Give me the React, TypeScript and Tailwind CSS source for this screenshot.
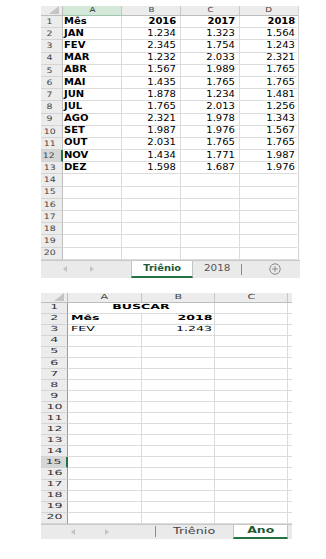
import React from "react";

const months = ["JAN", "FEV", "MAR", "ABR", "MAI", "JUN", "JUL", "AGO", "SET", "OUT", "NOV", "DEZ"];
const y2016 = ["1.234", "2.345", "1.232", "1.567", "1.435", "1.878", "1.765", "2.321", "1.987", "2.031", "1.434", "1.598"];
const y2017 = ["1.323", "1.754", "2.033", "1.989", "1.765", "1.234", "2.013", "1.978", "1.976", "1.765", "1.771", "1.687"];
const y2018 = ["1.564", "1.243", "2.321", "1.765", "1.765", "1.481", "1.256", "1.343", "1.567", "1.765", "1.987", "1.976"];

function Corner() {
  return (
    <svg width="10" height="8" viewBox="0 0 10 8" className="absolute right-[3px] bottom-[1px]">
      <polygon points="0,8 10,8 10,0" fill="#c4c4c4" />
    </svg>
  );
}

function Arrow({ dir }: { dir: "l" | "r" }) {
  return (
    <svg width="4" height="6" viewBox="0 0 4 6">
      {dir === "l" ? <polygon points="4,0 4,6 0,3" fill="#c2c2c2" /> : <polygon points="0,0 0,6 4,3" fill="#c2c2c2" />}
    </svg>
  );
}

function T1({ children, bold, right }: { children: React.ReactNode; bold?: boolean; right?: boolean }) {
  return (
    <span
      className={
        "inline-block text-[8px] leading-none text-black scale-x-[1.25] " +
        (right ? "origin-right " : "origin-left ") +
        (bold ? "font-bold" : "font-normal")
      }
    >
      {children}
    </span>
  );
}

function T2({ children, bold, right, center }: { children: React.ReactNode; bold?: boolean; right?: boolean; center?: boolean }) {
  return (
    <span
      className={
        "inline-block text-[7px] leading-none text-black scale-x-[1.8] " +
        (center ? "origin-center " : right ? "origin-right " : "origin-left ") +
        (bold ? "font-bold" : "font-normal")
      }
    >
      {children}
    </span>
  );
}

function Sheet1() {
  const rows: { a?: string; b?: string; c?: string; d?: string; bold?: boolean }[] = [];
  rows.push({ a: "Mês", b: "2016", c: "2017", d: "2018", bold: true });
  months.forEach((m, i) => rows.push({ a: m, b: y2016[i], c: y2017[i], d: y2018[i] }));
  while (rows.length < 20) rows.push({});

  return (
    <div className="ml-[41px] w-[259px]">
      <div className="w-[258px] border-r border-[#d4d4d4]">
        {/* header */}
        <div className="flex h-[10px]">
          <div className="relative w-[22px] bg-[#ececec] border-r border-b border-[#bdbdbd]">
            <Corner />
          </div>
          <div className="w-[59px] bg-[#d3e8d9] border-r border-[#c6c6c6] border-b border-b-[#9fc7ab] flex items-center justify-center">
            <span className="inline-block text-[7px] leading-none text-[#2b2b2b] scale-x-[1.25]">A</span>
          </div>
          <div className="w-[59px] bg-[#ececec] border-r border-[#c6c6c6] border-b border-b-[#bdbdbd] flex items-center justify-center">
            <span className="inline-block text-[7px] leading-none text-[#444] scale-x-[1.25]">B</span>
          </div>
          <div className="w-[59px] bg-[#ececec] border-r border-[#c6c6c6] border-b border-b-[#bdbdbd] flex items-center justify-center">
            <span className="inline-block text-[7px] leading-none text-[#444] scale-x-[1.25]">C</span>
          </div>
          <div className="w-[58px] bg-[#ececec] border-b border-[#bdbdbd] flex items-center justify-center">
            <span className="inline-block text-[7px] leading-none text-[#444] scale-x-[1.25]">D</span>
          </div>
        </div>
        {rows.map((r, i) => {
          const active = i === 11;
          return (
            <div key={i} className="flex h-[12.2px]">
              <div
                className={
                  "w-[22px] border-b border-[#d4d4d4] flex items-center justify-center pr-[4px] " +
                  (active ? "bg-[#d6d6d6] border-r-[2px] border-r-[#217346]" : "bg-[#ececec] border-r border-r-[#bdbdbd]")
                }
              >
                <span className="inline-block text-[7.5px] leading-none text-[#444] scale-x-[1.25]">{i + 1}</span>
              </div>
              <div className="w-[59px] border-r border-b border-[#dcdcdc] flex items-center pl-[1px]">
                {r.a && <T1 bold>{r.a}</T1>}
              </div>
              <div className="w-[59px] border-r border-b border-[#dcdcdc] flex items-center justify-end pr-[4px]">
                {r.b && <T1 right bold={r.bold}>{r.b}</T1>}
              </div>
              <div className="w-[59px] border-r border-b border-[#dcdcdc] flex items-center justify-end pr-[4px]">
                {r.c && <T1 right bold={r.bold}>{r.c}</T1>}
              </div>
              <div className="w-[57px] border-b border-[#dcdcdc] flex items-center justify-end pr-[2px]">
                {r.d && <T1 right bold={r.bold}>{r.d}</T1>}
              </div>
            </div>
          );
        })}
      </div>
      {/* tab bar */}
      <div className="flex h-[18px] w-[259px] bg-[#eaeaea] border-t border-[#c8c8c8]">
        <div className="w-[90px] flex items-center">
          <div className="ml-[22px]">
            <Arrow dir="l" />
          </div>
          <div className="ml-[23px]">
            <Arrow dir="r" />
          </div>
        </div>
        <div className="w-[62px] bg-white border-x border-[#c4c4c4] border-b-2 border-b-[#217346] flex items-center justify-center">
          <span className="inline-block text-[9px] leading-none font-bold text-[#1f5a37] scale-x-[1.1]">Triênio</span>
        </div>
        <div className="w-[48px] flex items-center justify-center">
          <span className="inline-block text-[8px] leading-none text-[#555] scale-x-[1.3]">2018</span>
        </div>
        <div className="w-px h-[11px] self-center bg-[#8a8a8a]" />
        <div className="flex-1 flex items-center">
          <svg width="12" height="12" viewBox="0 0 12 12" className="ml-[27px]">
            <circle cx="6" cy="6" r="5.2" fill="none" stroke="#8a8a8a" strokeWidth="1" />
            <line x1="3.2" y1="6" x2="8.8" y2="6" stroke="#8a8a8a" strokeWidth="1" />
            <line x1="6" y1="3.2" x2="6" y2="8.8" stroke="#8a8a8a" strokeWidth="1" />
          </svg>
        </div>
      </div>
    </div>
  );
}

function Sheet2() {
  const rows = Array.from({ length: 20 }, (_, i) => i);
  return (
    <div className="ml-[41px] mt-[15px] w-[251px]">
      <div className="flex h-[10px]">
        <div className="relative w-[27px] bg-[#ececec] border-r border-b border-[#bdbdbd]">
          <Corner />
        </div>
        <div className="w-[74px] bg-[#ececec] border-r border-[#c6c6c6] border-b border-b-[#bdbdbd] flex items-center justify-center">
          <span className="inline-block text-[7px] leading-none text-[#444] scale-x-[1.6]">A</span>
        </div>
        <div className="w-[73px] bg-[#ececec] border-r border-[#c6c6c6] border-b border-b-[#bdbdbd] flex items-center justify-center">
          <span className="inline-block text-[7px] leading-none text-[#444] scale-x-[1.6]">B</span>
        </div>
        <div className="w-[73px] bg-[#ececec] border-r border-[#c6c6c6] border-b border-b-[#bdbdbd] flex items-center justify-center">
          <span className="inline-block text-[7px] leading-none text-[#444] scale-x-[1.6]">C</span>
        </div>
        <div className="w-[4px] bg-[#ececec] border-b border-[#bdbdbd]" />
      </div>
      {rows.map((i) => {
        const active = i === 14;
        return (
          <div key={i} className="flex h-[11.05px]">
            <div
              className={
                "w-[27px] border-b border-[#d4d4d4] flex items-center justify-center " +
                (active ? "bg-[#d6d6d6] border-r-[2px] border-r-[#217346]" : "bg-[#ececec] border-r border-r-[#9a9a9a]")
              }
            >
              <span className="inline-block text-[7px] leading-none text-[#333] scale-x-[1.8]">{i + 1}</span>
            </div>
            {i === 0 ? (
              <div className="w-[147px] border-r border-b border-[#dcdcdc] flex items-center justify-center">
                <T2 bold center>BUSCAR</T2>
              </div>
            ) : (
              <>
                <div className="w-[74px] border-r border-b border-[#dcdcdc] flex items-center pl-[3px]">
                  {i === 1 && <T2 bold>Mês</T2>}
                  {i === 2 && <T2>FEV</T2>}
                </div>
                <div className="w-[73px] border-r border-b border-[#dcdcdc] flex items-center justify-end pr-[2px]">
                  {i === 1 && <T2 bold right>2018</T2>}
                  {i === 2 && <T2 right>1.243</T2>}
                </div>
              </>
            )}
            <div className="w-[73px] border-r border-b border-[#dcdcdc]" />
            <div className="w-[4px] border-b border-[#dcdcdc]" />
          </div>
        );
      })}
      <div className="flex h-[15px] w-[251px] bg-[#eaeaea] border-t border-[#c8c8c8]">
        <div className="w-[114px] flex items-center">
          <div className="ml-[30px]">
            <Arrow dir="l" />
          </div>
          <div className="ml-[30px]">
            <Arrow dir="r" />
          </div>
        </div>
        <div className="w-px h-[11px] self-center bg-[#8a8a8a]" />
        <div className="w-[77px] flex items-center justify-center">
          <span className="inline-block text-[8px] leading-none text-[#444] scale-x-[1.6]">Triênio</span>
        </div>
        <div className="w-[55px] bg-white border-x border-[#c4c4c4] border-b-2 border-b-[#217346] flex items-center justify-center">
          <span className="inline-block text-[8px] leading-none font-bold text-[#1f5a37] scale-x-[1.55]">Ano</span>
        </div>
      </div>
    </div>
  );
}

export default function App() {
  return (
    <div className="w-[326px] h-[559px] bg-white overflow-hidden pt-[6px] font-['DejaVu_Sans',sans-serif]">
      <Sheet1 />
      <Sheet2 />
    </div>
  );
}
